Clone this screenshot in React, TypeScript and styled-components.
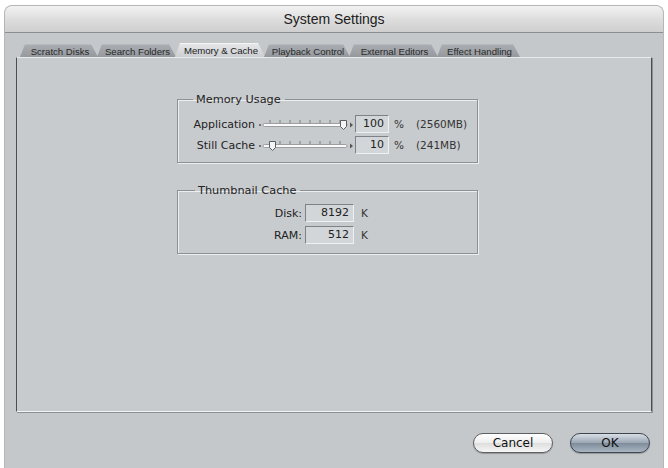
import React from "react";
import styled, { createGlobalStyle } from "styled-components";

const GlobalStyle = createGlobalStyle`
  html, body {
    margin: 0;
    padding: 0;
    background: #ffffff;
    font-family: "DejaVu Sans", "Liberation Sans", sans-serif;
    color: #1e1e1e;
  }
`;

const StyledWindow = styled.div`
  margin: 5px 4px 0 4px;
  height: 463px;
  box-sizing: border-box;
  border-radius: 8px 8px 0 0;
  background: #c5c8cb;
  border: 1px solid #b4b6b9;
  border-bottom: none;
  display: flex;
  flex-direction: column;
  overflow: hidden;
`;

const TitleBar = styled.div`
  height: 26px;
  flex-shrink: 0;
  display: flex;
  align-items: center;
  justify-content: center;
  background: linear-gradient(#f2f2f2, #dcdcdc 55%, #cfcfcf);
  border-bottom: 1px solid #8c8e91;
  font-family: "Liberation Sans", Arial, sans-serif;
  font-size: 14px;
  color: #202020;
`;

const Body = styled.div`
  flex: 1;
  display: flex;
  flex-direction: column;
  padding: 10px 11px 0 11px;
`;

const TabRow = styled.div`
  display: flex;
  align-items: flex-end;
  height: 14px;
  padding-left: 4px;
`;

const Tab = styled.div<{ $active?: boolean; $w: number }>`
  width: ${(p) => p.$w}px;
  height: ${(p) => (p.$active ? 14 : 13)}px;
  margin-right: -1px;
  box-sizing: border-box;
  display: flex;
  align-items: center;
  justify-content: center;
  font-family: "Liberation Sans", Arial, sans-serif;
  font-size: 9.6px;
  padding-left: 2px;
  color: ${(p) => (p.$active ? "#202020" : "#2a2a2a")};
  background: ${(p) =>
    p.$active
      ? "linear-gradient(#e4e6e8, #ccced1)"
      : "linear-gradient(#a9acb0, #95989c)"};
  clip-path: polygon(5px 0, calc(100% - 7px) 0, 100% 100%, 0 100%);
  border-top: 1px solid ${(p) => (p.$active ? "#f4f4f4" : "#b8babd")};
`;

const Panel = styled.div`
  width: 636px;
  height: 355px;
  box-sizing: border-box;
  border-left: 1px solid #4c4e51;
  border-top: 1px solid #e8eaec;
  border-right: 1px solid #4c4e51;
  border-bottom: 1px solid #f2f3f4;
  box-shadow: 1px 1px 0 #8d9093;
  background: #c8cbce;
  padding: 35px 0 0 160px;
  display: flex;
  flex-direction: column;
  gap: 21px;
`;

const Group = styled.fieldset<{ $top: number; $bottom: number; $gap: number }>`
  width: 301px;
  box-sizing: border-box;
  margin: 0;
  padding: ${(p) => p.$top}px 0 ${(p) => p.$bottom}px 0;
  border: 1px solid #8e9194;
  box-shadow: 1px 1px 0 #eceef0, inset 1px 1px 0 #eceef0;
  display: flex;
  flex-direction: column;
  gap: ${(p) => p.$gap}px;
`;

const Legend = styled.legend<{ $x: number }>`
  margin-left: ${(p) => p.$x}px;
  padding: 0 4px 0 3px;
  font-size: 11.3px;
  color: #222;
`;

const Row = styled.div<{ $label: number }>`
  display: grid;
  grid-template-columns: ${(p) => p.$label}px auto auto auto auto;
  justify-content: start;
  align-items: center;
  height: 18px;
`;

const Label = styled.span`
  text-align: right;
  font-size: 11px;
  color: #222;
  padding-right: 3px;
`;

const Field = styled.div<{ $w: number }>`
  width: ${(p) => p.$w}px;
  height: 18px;
  box-sizing: border-box;
  border: 1px solid;
  border-color: #7e8185 #eef0f1 #eef0f1 #7e8185;
  background: #d3d6d9;
  font-size: 11px;
  text-align: right;
  padding-right: 4px;
  line-height: 16px;
  color: #222;
`;

const Unit = styled.span<{ $gap: number }>`
  font-size: 10.5px;
  margin-left: ${(p) => p.$gap}px;
  color: #333;
`;

const Footer = styled.div`
  flex: 1;
  display: flex;
  justify-content: flex-end;
  align-items: flex-start;
  gap: 17px;
  padding: 21px 2px 0 0;
`;

const Button = styled.div<{ $default?: boolean }>`
  width: 80px;
  height: 20px;
  box-sizing: border-box;
  border-radius: 10px;
  border: 1px solid ${(p) => (p.$default ? "#3e4650" : "#5d5f62")};
  background: ${(p) =>
    p.$default
      ? "linear-gradient(#d8dee5, #9aa6b3 50%, #7f8c9a 52%, #a9b5c2)"
      : "linear-gradient(#ffffff, #eeeeee 50%, #dedede 52%, #f6f6f6)"};
  box-shadow: 0 1px 1px rgba(0, 0, 0, 0.25);
  display: flex;
  align-items: center;
  justify-content: center;
  font-size: 12px;
  color: #111;
`;

function Slider({ pos }: { pos: number }) {
  const ticks = [12, 22, 32, 42, 52, 62, 72, 82];
  return (
    <svg width="97" height="14" viewBox="0 0 97 14">
      <circle cx="2" cy="8" r="1" fill="#555" />
      {ticks.map((t) => (
        <line key={t} x1={t} y1="3" x2={t} y2="6" stroke="#7a7d80" strokeWidth="1" />
      ))}
      <rect x="5" y="6.5" width="84" height="3" rx="1.5" fill="#fbfbfb" stroke="#8a8d90" strokeWidth="0.8" />
      <path d="M92 5.5 L95 8 L92 10.5 Z" fill="#555" />
      <path
        d={`M${pos - 3.5} 3.5 h6 v6 l-3 3 l-3 -3 Z`}
        fill="#f4f4f4"
        stroke="#5b5e61"
        strokeWidth="1"
      />
    </svg>
  );
}

export default function App() {
  const tabs = [
    { label: "Scratch Disks", w: 78 },
    { label: "Search Folders", w: 79 },
    { label: "Memory & Cache", w: 90, active: true },
    { label: "Playback Control", w: 86 },
    { label: "External Editors", w: 89 },
    { label: "Effect Handling", w: 83 },
  ];
  return (
    <>
      <GlobalStyle />
      <StyledWindow>
        <TitleBar>System Settings</TitleBar>
        <Body>
          <TabRow>
            {tabs.map((t) => (
              <Tab key={t.label} $w={t.w} $active={t.active}>
                {t.label}
              </Tab>
            ))}
          </TabRow>
          <Panel>
            <Group $top={9} $bottom={8} $gap={3}>
              <Legend $x={15}>Memory Usage</Legend>
              <Row $label={80}>
                <Label>Application</Label>
                <Slider pos={86} />
                <Field $w={34}>100</Field>
                <Unit $gap={5}>%</Unit>
                <Unit $gap={12}>(2560MB)</Unit>
              </Row>
              <Row $label={80}>
                <Label>Still Cache</Label>
                <Slider pos={15} />
                <Field $w={34}>10</Field>
                <Unit $gap={5}>%</Unit>
                <Unit $gap={12}>(241MB)</Unit>
              </Row>
            </Group>
            <Group $top={7} $bottom={9} $gap={4}>
              <Legend $x={17}>Thumbnail Cache</Legend>
              <Row $label={127}>
                <Label>Disk:</Label>
                <Field $w={49}>8192</Field>
                <Unit $gap={7}>K</Unit>
              </Row>
              <Row $label={127}>
                <Label>RAM:</Label>
                <Field $w={49}>512</Field>
                <Unit $gap={7}>K</Unit>
              </Row>
            </Group>
          </Panel>
          <Footer>
            <Button>Cancel</Button>
            <Button $default>OK</Button>
          </Footer>
        </Body>
      </StyledWindow>
    </>
  );
}
